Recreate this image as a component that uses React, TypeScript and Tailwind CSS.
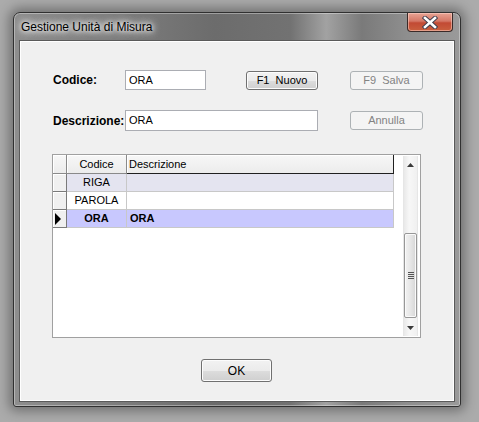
import React from "react";

const font = "font-['Liberation_Sans',Arial,sans-serif]";

function WinButton({ label, disabled, className }: { label: string; disabled?: boolean; className?: string }) {
  return (
    <div
      className={
        "flex items-center justify-center rounded-[3px] border text-[11px] " +
        (disabled
          ? "border-[#adb2b5] bg-[#f4f4f4] text-[#838383] "
          : "border-[#707070] bg-[linear-gradient(180deg,#f2f2f2_0%,#ebebeb_50%,#dddddd_51%,#cfcfcf_100%)] text-black shadow-[inset_0_0_0_1px_#fcfcfc] ") +
        (className ?? "")
      }
    >
      <span className="whitespace-pre">{label}</span>
    </div>
  );
}

function HeaderCell({ w, children, center, last }: { w: string; children?: React.ReactNode; center?: boolean; last?: boolean }) {
  return (
    <div
      className={
        w +
        " h-full flex items-center bg-[linear-gradient(180deg,#f7f7f7,#ececec)] border-b border-r text-[11px] shadow-[inset_1px_1px_0_#ffffff] " +
        (last ? "border-[#202020] " : "border-[#8a8a8a] ") +
        (center ? "justify-center" : "pl-[2px]")
      }
    >
      {children}
    </div>
  );
}

function Indicator({ active }: { active?: boolean }) {
  return (
    <div className="w-[14px] h-full flex items-center bg-[#f0f0f0] border-r border-b border-[#7a7a7a] shadow-[inset_1px_1px_0_#ffffff] pl-[2px]">
      {active && (
        <svg width="6" height="12" viewBox="0 0 6 12">
          <path d="M0 0 L6 6 L0 12 Z" fill="#000" />
        </svg>
      )}
    </div>
  );
}

const rows = [
  { code: "RIGA", desc: "", bg: "bg-[#e4e4f0]", bold: false, active: false },
  { code: "PAROLA", desc: "", bg: "bg-white", bold: false, active: false },
  { code: "ORA", desc: "ORA", bg: "bg-[#c8c8fe]", bold: true, active: true },
];

export default function App() {
  return (
    <div className={"w-[479px] h-[422px] bg-[#ababab] overflow-hidden pt-[12px] pl-[13px] " + font}>
      <div className="w-[448px] h-[395px] rounded-t-[7px] rounded-b-[3px] border border-[#303030] bg-[linear-gradient(90deg,#8e8e8e_0%,#7c7c7c_25%,#6c6c6c_45%,#727272_62%,#a2a2a2_70%,#7a7a7a_78%,#8e8e8e_88%,#9a9a9a_100%)] shadow-[0_0_12px_4px_rgba(0,0,0,0.35),inset_0_0_0_1px_rgba(255,255,255,0.35)] flex flex-col px-[5px] pb-[4px]">
        {/* title bar */}
        <div className="h-[27px] flex items-start justify-between">
          <span className="pl-[2px] pt-[8px] text-[12px] text-black leading-none [text-shadow:0_0_8px_#ffffff,0_0_8px_#ffffff,0_0_4px_#ffffff]">
            Gestione Unità di Misura
          </span>
          <div className="w-[46px] h-[19px] mr-[2px] rounded-b-[4px] border border-t-0 border-[#3a2a28] bg-[linear-gradient(180deg,#e8a494_0%,#d47766_45%,#c24a34_55%,#c9603f_100%)] shadow-[inset_0_0_0_1px_rgba(255,220,210,0.5)] flex items-center justify-center">
            <svg width="16" height="13" viewBox="0 0 16 13">
              <path d="M3 2 L13 11 M13 2 L3 11" stroke="#3c3c4c" strokeWidth="4.4" strokeLinecap="square" />
              <path d="M3 2 L13 11 M13 2 L3 11" stroke="#ffffff" strokeWidth="2.6" strokeLinecap="square" />
            </svg>
          </div>
        </div>

        {/* client */}
        <div className="h-[362px] border border-[#5a5a5a] shadow-[inset_0_0_0_1px_#ffffff] bg-[#f0f0f0] flex flex-col pl-[32px] pt-[29px]">
          <div className="flex items-center h-[20px]">
            <span className="w-[73px] pl-[1px] text-[12px] font-bold text-black">Codice:</span>
            <div className="w-[81px] h-[20px] bg-white border border-[#abadb3] flex items-center pl-[3px] text-[11px] text-black">ORA</div>
            <WinButton label="F1  Nuovo" className="ml-[40px] w-[72px] h-[19px]" />
            <WinButton label="F9  Salva" disabled className="ml-[32px] w-[73px] h-[19px]" />
          </div>

          <div className="flex items-center h-[21px] mt-[20px]">
            <span className="w-[73px] pl-[1px] text-[12px] font-bold text-black">Descrizione:</span>
            <div className="w-[193px] h-[21px] bg-white border border-[#abadb3] flex items-center pl-[3px] text-[11px] text-black">ORA</div>
            <WinButton label="Annulla" disabled className="ml-[32px] w-[73px] h-[19px]" />
          </div>

          {/* grid */}
          <div className="mt-[23px] w-[369px] h-[184px] border border-[#a0a0a0] bg-white flex">
            <div className="w-[341px] flex flex-col">
              <div className="flex h-[19px]">
                <HeaderCell w="w-[14px]" />
                <HeaderCell w="w-[60px]" center>Codice</HeaderCell>
                <HeaderCell w="w-[267px]" last>Descrizione</HeaderCell>
              </div>
              {rows.map((r) => (
                <div key={r.code} className="flex h-[18px] text-[11px] text-black">
                  <Indicator active={r.active} />
                  <div className={"w-[60px] h-full flex items-center justify-center border-r border-b border-[#c8c8c8] " + r.bg + (r.bold ? " font-bold" : "")}>
                    {r.code}
                  </div>
                  <div className={"w-[267px] h-full flex items-center pl-[3px] border-r border-b border-[#c8c8c8] " + r.bg + (r.bold ? " font-bold" : "")}>
                    {r.desc}
                  </div>
                </div>
              ))}
            </div>

            {/* scrollbar */}
            <div className="ml-[9px] w-[15px] my-[1px] flex flex-col border-x border-[#e6e6e6] bg-[linear-gradient(90deg,#e9e9e9,#f7f7f7_40%,#f0f0f0)]">
              <div className="h-[17px] flex items-center justify-center">
                <svg width="7" height="4" viewBox="0 0 7 4">
                  <path d="M0 4 L3.5 0 L7 4 Z" fill="#3a3a3a" />
                </svg>
              </div>
              <div className="h-[60px]" />
              <div className="h-[85px] rounded-[2px] border border-[#979797] bg-[linear-gradient(90deg,#f2f2f2,#e6e6e6_50%,#d6d6d6)] shadow-[inset_0_0_0_1px_#fafafa] flex flex-col items-center justify-center gap-[1px]">
                <div className="w-[6px] h-[1px] bg-[#555]" />
                <div className="w-[6px] h-[1px] bg-[#555]" />
                <div className="w-[6px] h-[1px] bg-[#555]" />
                <div className="w-[6px] h-[1px] bg-[#555]" />
              </div>
              <div className="flex-1" />
              <div className="h-[17px] flex items-center justify-center">
                <svg width="7" height="4" viewBox="0 0 7 4">
                  <path d="M0 0 L7 0 L3.5 4 Z" fill="#3a3a3a" />
                </svg>
              </div>
            </div>
          </div>

          <WinButton label="OK" className="mt-[21px] ml-[149px] w-[71px] h-[23px] !text-[12px]" />
        </div>
      </div>
    </div>
  );
}
